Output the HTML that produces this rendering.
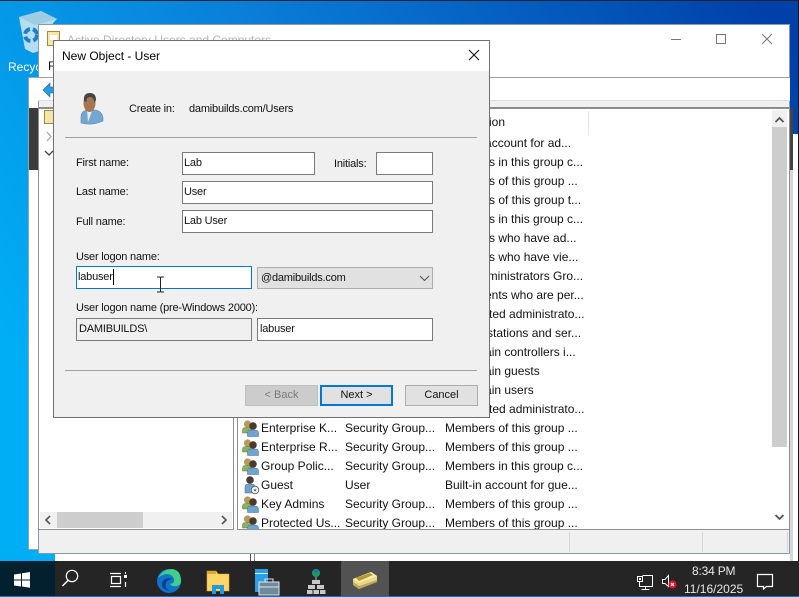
<!DOCTYPE html>
<html><head><meta charset="utf-8"><style>
*{box-sizing:border-box}
html,body{margin:0;padding:0}
body{width:799px;height:596px;position:relative;overflow:hidden;background:#0078d7;font:12px "Liberation Sans",sans-serif;color:#000}
.a{position:absolute}
.t{position:absolute;white-space:nowrap;line-height:16px;color:#111}
.s{font-size:11px;letter-spacing:-.2px}
.i{position:absolute;background:#fff;border:1px solid #7a7a7a;height:23px;padding:2px 1px;line-height:16px;color:#111;white-space:nowrap;font-size:11px;letter-spacing:-.2px}
.b{position:absolute;top:385px;height:21px;width:73px;background:#e1e1e1;border:1px solid #adadad;text-align:center;line-height:19px;font-size:11px;color:#111}
.r{position:absolute;left:0;height:19px;width:553px;white-space:nowrap;color:#111}
.r span{position:absolute;top:1px;line-height:16px}
</style></head><body>
<svg class="a" style="left:0;top:0" width="799" height="596"><defs><linearGradient id="g" x1="0" y1="0.55" x2="1" y2="0.1"><stop offset="0" stop-color="#00aef5"/><stop offset=".45" stop-color="#0a7fd8"/><stop offset="1" stop-color="#0040a8"/></linearGradient></defs><rect width="799" height="596" fill="url(#g)"/><rect width="799" height="1" fill="#1b2430"/></svg>

<svg class="a" style="left:17px;top:9px" width="42" height="46" viewBox="0 0 42 46"><path d="M2 8 L24 2 L40 10 L36 14 L34 38 L16 44 L8 40 Z" fill="#d3ebf5" opacity=".85"/><path d="M2 8 L24 2 L40 10 L18 16 Z" fill="#9ccde2"/><circle cx="14" cy="26" r="6" fill="none" stroke="#1d7fc9" stroke-width="4" stroke-dasharray="7 3"/></svg>
<div class="t" style="left:8px;top:59px;color:#fff">Recycle Bin</div>

<!-- back windows -->
<div class="a" style="left:55px;top:553px;width:738px;height:8px;background:#fff"></div>
<div class="a" style="left:250px;top:553px;width:1px;height:8px;background:#555"></div>
<div class="a" style="left:254px;top:553px;width:1px;height:8px;background:#888"></div>
<div class="a" style="left:28px;top:77px;width:12px;height:473px;background:#fff;border:1px solid #8aa;border-right:0"></div>
<div class="a" style="left:29px;top:108px;width:9px;height:62px;background:#3b3b3b"></div>
<div class="a" style="left:790px;top:108px;width:3px;height:62px;background:#444"></div>
<div class="a" style="left:790px;top:170px;width:3px;height:391px;background:#d8d8d8"></div>
<div class="a" style="left:793px;top:134px;width:5px;height:427px;background:#fff"></div>
<div class="a" style="left:798px;top:0;width:1px;height:561px;background:#101820"></div>

<!-- ADUC window -->
<div class="a" style="left:38px;top:24px;width:752px;height:530px;background:#fff;border:1px solid #8a99a8"></div>
<svg class="a" style="left:47px;top:31px" width="14" height="16"><rect x=".5" y=".5" width="12" height="14" fill="#f4e6a8" stroke="#a08a3c"/><rect x="3" y="4" width="7" height="5" fill="#fff"/></svg>
<div class="t" style="left:67px;top:32px;color:#b4b4b4">Active Directory Users and Computers</div>
<div class="t" style="left:48px;top:58px;color:#111">F</div>
<svg class="a" style="left:660px;top:30px" width="120" height="20" fill="none" stroke="#777"><path d="M11 9.500H21"/><rect x="56.500" y="4.500" width="9" height="9"/><path d="M102 4L112 14M112 4L102 14"/></svg>
<div class="a" style="left:38px;top:77px;width:752px;height:24px;background:#fff;border-top:1px solid #a0a0a0;border-bottom:1px solid #ddd"></div>
<svg class="a" style="left:42px;top:82px" width="14" height="16"><path d="M1 8L8 1V5H13V11H8V15Z" fill="#2a9be0" stroke="#1769a8" stroke-width=".6"/></svg>
<div class="a" style="left:39px;top:101px;width:750px;height:7px;background:#f0f0f0;border-bottom:1px solid #888"></div>

<!-- left tree -->
<div class="a" style="left:38px;top:108px;width:196px;height:422px;background:#fff;border:1px solid #8f8f8f"></div>
<svg class="a" style="left:44px;top:110px" width="12" height="14"><rect x=".5" y=".5" width="11" height="13" fill="#f4e6a8" stroke="#a08a3c"/></svg>
<svg class="a" style="left:44px;top:130px" width="10" height="30" fill="none"><path d="M3 2L7 6.500L3 11" stroke="#aaa" stroke-width="1.300"/><path d="M1 21L5 25L9 21" stroke="#444" stroke-width="1.300"/></svg>
<div class="a" style="left:40px;top:512px;width:192px;height:16px;background:#f0f0f0"></div>
<div class="a" style="left:57px;top:512px;width:86px;height:16px;background:#cdcdcd"></div>
<svg class="a" style="left:44px;top:514px" width="186" height="12" fill="none" stroke="#555" stroke-width="1.600"><path d="M6 2L2 6L6 10"/><path d="M178 2L182 6L178 10"/></svg>

<!-- right list -->
<div class="a" style="left:237px;top:108px;width:553px;height:422px;background:#fff;border:1px solid #8f8f8f;overflow:hidden">
<div class="t" style="left:207px;top:5px">Description</div>
<div class="a" style="left:350px;top:2px;width:1px;height:24px;background:#e5e5e5"></div>
<div class="a" id="rows" style="left:0;top:0;width:553px;height:420px">
<div class="r" style="top:25px"><span style="left:207px">Built-in account for ad...</span></div>
<div class="r" style="top:44px"><span style="left:207px">Members in this group c...</span></div>
<div class="r" style="top:63px"><span style="left:207px">Members of this group ...</span></div>
<div class="r" style="top:82px"><span style="left:207px">Members of this group t...</span></div>
<div class="r" style="top:101px"><span style="left:207px">Members in this group c...</span></div>
<div class="r" style="top:120px"><span style="left:207px">Members who have ad...</span></div>
<div class="r" style="top:139px"><span style="left:207px">Members who have vie...</span></div>
<div class="r" style="top:158px"><span style="left:207px">DNS Administrators Gro...</span></div>
<div class="r" style="top:177px"><span style="left:207px">DNS clients who are per...</span></div>
<div class="r" style="top:196px"><span style="left:207px">Designated administrato...</span></div>
<div class="r" style="top:215px"><span style="left:207px">All workstations and ser...</span></div>
<div class="r" style="top:234px"><span style="left:207px">All domain controllers i...</span></div>
<div class="r" style="top:253px"><span style="left:207px">All domain guests</span></div>
<div class="r" style="top:272px"><span style="left:207px">All domain users</span></div>
<div class="r" style="top:291px"><span style="left:207px">Designated administrato...</span></div>
<div class="r" style="top:310px"><span style="left:23px">Enterprise K...</span><span style="left:107px">Security Group...</span><span style="left:207px">Members of this group ...</span></div>
<div class="r" style="top:329px"><span style="left:23px">Enterprise R...</span><span style="left:107px">Security Group...</span><span style="left:207px">Members of this group ...</span></div>
<div class="r" style="top:348px"><span style="left:23px">Group Polic...</span><span style="left:107px">Security Group...</span><span style="left:207px">Members in this group c...</span></div>
<div class="r" style="top:367px"><span style="left:23px">Guest</span><span style="left:107px">User</span><span style="left:207px">Built-in account for gue...</span></div>
<div class="r" style="top:386px"><span style="left:23px">Key Admins</span><span style="left:107px">Security Group...</span><span style="left:207px">Members of this group ...</span></div>
<div class="r" style="top:405px"><span style="left:23px">Protected Us...</span><span style="left:107px">Security Group...</span><span style="left:207px">Members of this group ...</span></div>
</div>
<svg class="a" style="left:4px;top:310px" width="18" height="112" viewBox="0 0 18 112">
<defs><g id="gp"><circle cx="5.500" cy="4" r="3.600" fill="#b89a58"/><path d="M0.500 13V10Q0.500 7.500 3.500 7.500H8Q10 7.500 10 10V13Z" fill="#8ab060" stroke="#5c7a3c" stroke-width=".5"/><circle cx="11" cy="6" r="3.800" fill="#4a3a2e"/><path d="M5.500 16.500V13Q5.500 10 9 10H13Q16.500 10 16.500 13V16.500Z" fill="#6ea4cf" stroke="#3c6a94" stroke-width=".5"/></g></defs>
<use href="#gp" y="1"/><use href="#gp" y="20"/><use href="#gp" y="39"/>
<circle cx="8" cy="61" r="3.800" fill="#4a3a2e"/><path d="M3 74V68Q3 65 6 65H10Q13 65 13 68V74Z" fill="#6ea4cf" stroke="#3c6a94" stroke-width=".5"/><circle cx="13" cy="71" r="3.800" fill="#eee" stroke="#555" stroke-width=".8"/><path d="M11.500 70.500H14.500L13 72.500Z" fill="#333"/>
<use href="#gp" y="77"/><use href="#gp" y="96"/></svg>
<div class="a" style="left:534px;top:0;width:15px;height:420px;background:#fff"></div>
<div class="a" style="left:534px;top:1px;width:15px;height:17px;background:#f0f0f0"></div>
<div class="a" style="left:534px;top:18px;width:15px;height:320px;background:#cdcdcd"></div>
<svg class="a" style="left:534px;top:3px" width="15" height="412" fill="none" stroke="#555" stroke-width="1.800"><path d="M3.500 10L7.500 6L11.500 10"/><path d="M3.500 403L7.500 407L11.500 403"/></svg>
</div>

<!-- status bar -->
<div class="a" style="left:39px;top:530px;width:750px;height:23px;background:#f0f0f0"></div>
<div class="a" style="left:569px;top:532px;width:1px;height:20px;background:#d8d8d8"></div>
<div class="a" style="left:702px;top:532px;width:1px;height:20px;background:#d8d8d8"></div>
<div class="a" style="left:787px;top:532px;width:1px;height:20px;background:#d8d8d8"></div>

<!-- dialog -->
<div class="a" style="left:53px;top:40px;width:437px;height:378px;background:#f0f0f0;border:1px solid #707070">
<div class="a" style="left:0;top:0;width:435px;height:30px;background:#fff"></div>
</div>
<div class="t" style="left:62px;top:48px;color:#000">New Object - User</div>
<svg class="a" style="left:468px;top:49px" width="12" height="12" stroke="#111" stroke-width="1.100"><path d="M1 1L11 11M11 1L1 11"/></svg>
<svg class="a" style="left:79px;top:92px" width="26" height="34" viewBox="0 0 26 34"><path d="M2 31V25Q2 19 8 18H17Q24 20 24 27V29Q13 34 2 31Z" fill="#74a6cf" stroke="#5a8ab2" stroke-width=".6"/><path d="M8 18L9 30L13 19Z" fill="#e4eef6"/><ellipse cx="10.500" cy="11" rx="6" ry="9" fill="#a87552"/><path d="M5 9Q4 1 11 1Q17 1 17 8L15.500 11Q15 5 11 5Q7 5 7.500 10Z" fill="#444"/></svg>
<div class="t s" style="left:129px;top:101px">Create in:</div>
<div class="t s" style="left:189px;top:101px">damibuilds.com/Users</div>
<div class="a" style="left:65px;top:137px;width:412px;height:1px;background:#a0a0a0"></div>

<div class="t s" style="left:76px;top:155px">First name:</div>
<div class="i" style="left:182px;top:152px;width:133px">Lab</div>
<div class="t s" style="left:334px;top:156px">Initials:</div>
<div class="i" style="left:376px;top:152px;width:57px"></div>
<div class="t s" style="left:76px;top:184px">Last name:</div>
<div class="i" style="left:182px;top:181px;width:251px">User</div>
<div class="t s" style="left:76px;top:214px">Full name:</div>
<div class="i" style="left:182px;top:210px;width:251px">Lab User</div>
<div class="t s" style="left:76px;top:249px">User logon name:</div>
<div class="i" style="left:76px;top:266px;width:176px;border-color:#0078d7">labuser</div>
<div class="a" style="left:113px;top:269px;width:1px;height:16px;background:#000"></div>
<svg class="a" style="left:156px;top:276px" width="9" height="17" fill="none" stroke="#222" stroke-width="1"><path d="M1 1H3.500Q4.500 1 4.500 2V15Q4.500 16 3.500 16H1M8 1H5.500Q4.500 1 4.500 2M4.500 15Q4.500 16 5.500 16H8"/></svg>
<div class="i" style="left:257px;top:267px;width:176px;height:22px;background:#e1e1e1;border-color:#adadad;padding:2px 3px">@damibuilds.com</div>
<svg class="a" style="left:419px;top:274px" width="11" height="9" fill="none" stroke="#555" stroke-width="1.100"><path d="M1 2L5.500 6.500L10 2"/></svg>
<div class="t s" style="left:76px;top:300px">User logon name (pre-Windows 2000):</div>
<div class="i" style="left:76px;top:318px;width:176px;background:#f0f0f0;padding-left:2px">DAMIBUILDS\</div>
<div class="i" style="left:257px;top:318px;width:176px;padding-left:2px">labuser</div>
<div class="a" style="left:65px;top:370px;width:412px;height:1px;background:#a0a0a0"></div>
<div class="b" style="left:245px;background:#cccccc;border-color:#bfbfbf;color:#7a7a7a">&lt; Back</div>
<div class="b" style="left:320px;border:2px solid #0078d7;line-height:17px">Next &gt;</div>
<div class="b" style="left:405px">Cancel</div>

<!-- taskbar -->
<div class="a" style="left:0;top:561px;width:799px;height:35px;background:#252525"></div>
<div class="a" style="left:0;top:561px;width:55px;height:35px;background:#02202e"></div>
<div class="a" style="left:341px;top:561px;width:48px;height:35px;background:#525252"></div>
<svg class="a" style="left:0;top:561px" width="399" height="35">
<path d="M14 13.500L21 12.500V18.500H14ZM22 12.300L30 11V18.500H22ZM14 19.500H21V25.500L14 24.500ZM22 19.500H30V26.700L22 25.500Z" fill="#fff"/>
<circle cx="72" cy="15" r="5.700" fill="none" stroke="#fff" stroke-width="1.200"/><path d="M68 19.500L62.500 25" stroke="#fff" stroke-width="1.400"/>
<g fill="none" stroke="#fff" stroke-width="1.200"><path d="M110 12.500H121M110 25.500H121"/><rect x="111.500" y="15.500" width="9" height="7"/><path d="M125.500 21V26"/></g><rect x="124" y="14" width="3" height="3" fill="#fff"/><path d="M125.500 11V13" stroke="#fff"/>
<circle cx="169" cy="20" r="12" fill="#1172c9"/><path d="M158 17Q163 8 172 8Q181 9 181 20Q181 24 177 25Q172 26 170 23Q175 22 174 18Q172 13 166 13Q161 14 158 17Z" fill="#3ecf8e"/><path d="M169 17Q161 18 162 25Q164 29 170 30Q164 27 166 22Q167 19 172 18Z" fill="#0b3f8f"/>
<path d="M207 15V10H216L218 13H229V30H207Z" fill="#ffd565" stroke="#d9a437" stroke-width=".6"/><rect x="207" y="10" width="9" height="3" fill="#e0a53a"/><path d="M212 33V24H224V33H220V28H216V33Z" fill="#1f9be0"/>
<rect x="255" y="8" width="13" height="23" fill="#2b9fe6"/><rect x="255" y="12" width="13" height="1" fill="#d8eefa"/>
<rect x="259" y="21" width="20" height="13" fill="#6f8a9c" stroke="#dfe7ec"/><path d="M265 21V18H273V21" fill="none" stroke="#dfe7ec"/><path d="M259 26H279" stroke="#dfe7ec"/>
<circle cx="316" cy="12" r="4" fill="#1aa14f"/><path d="M313 10A4 4 0 0 1 319 10L316 13Z" fill="#1c6fd6"/>
<path d="M316 16V19" stroke="#bbb"/><g fill="#c8c8c8"><rect x="312" y="19" width="8" height="4"/><rect x="308" y="24" width="7" height="4"/><rect x="317" y="24" width="7" height="4"/><rect x="307" y="29" width="5.500" height="4"/><rect x="313.500" y="29" width="5.500" height="4"/><rect x="320" y="29" width="5.500" height="4"/></g>
<path d="M353 18L371 11L377 15V21L359 28L353 24Z" fill="#e8d98a"/><path d="M353 18L371 11L377 15L359 22Z" fill="#f5eeb0"/><path d="M356 17L370 12L373 14L359 20Z" fill="#b6962f"/><path d="M353 24L359 28L377 21V19L359 25L353 21Z" fill="#bba858"/>
</svg>
<svg class="a" style="left:630px;top:561px" width="160" height="35" fill="none" stroke="#fff" stroke-width="1">
<path d="M12.500 14.500H22.500V25.500H9.500V21"/><rect x="7.500" y="15.500" width="5" height="5" fill="#252525"/><rect x="9" y="17" width="2" height="2" fill="#fff" stroke="none"/><path d="M15.500 25.500V28.500M11.500 28.500H19.500"/>
<path d="M32.500 18.500H35L38.500 14.500V25.500L35 22.500H32.500Z"/>
<circle cx="42.500" cy="23.500" r="4" fill="#e81123" stroke="none"/><path d="M41 22L44 25M44 22L41 25" stroke-width="1.100"/>
<path d="M127.500 13.500H142.500V25.500H136.500L133.500 28V25.500H127.500Z" stroke-width="1.200"/>
</svg>
<div class="t" style="left:692px;top:563px;color:#e8e8e8;letter-spacing:-.2px">8:34 PM</div>
<div class="t" style="left:684px;top:581px;color:#e8e8e8">11/16/2025</div>
</body></html>
